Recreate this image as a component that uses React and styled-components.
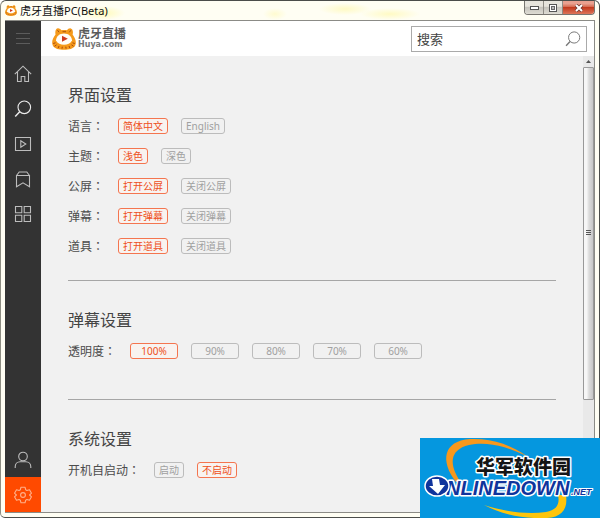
import React, { useState } from "react";
import styled, { createGlobalStyle, css } from "styled-components";

const GlobalStyle = createGlobalStyle`
  *, *::before, *::after { box-sizing: border-box; }
  body {
    margin: 0;
    background: #fff;
    color: #4c4c4c;
    font-family: "Noto Sans", "Noto Sans CJK SC", sans-serif;
  }
  button, input { font: inherit; color: inherit; }
  button { cursor: pointer; }
`;

const Window = styled.div`
  display: flex;
  flex-direction: column;
  height: 100vh;
  min-height: 400px;
  padding: 0 4px 4px;
  border: 1px solid #4b4d4a;
  border-left-color: #8d8d82;
  border-radius: 6px 6px 5px 5px;
  background: #fffef3;
  overflow: hidden;
`;

const TitleBar = styled.header`
  flex: none;
  display: flex;
  align-items: center;
  height: 19px;
  background:
    radial-gradient(ellipse 22px 7px at 98px 12px, #fffbb8, transparent),
    radial-gradient(ellipse 26px 6px at 340px 8px, #fffac4, transparent),
    radial-gradient(ellipse 30px 6px at 385px 13px, #fffac4, transparent),
    radial-gradient(ellipse 12px 6px at 270px 13px, #fffbd0, transparent);
`;

const WindowTitle = styled.h1`
  flex: 1;
  margin: 0 0 0 3px;
  font-size: 11px;
  line-height: 16px;
  font-weight: 400;
  color: #111;
`;

const WindowControls = styled.div`
  display: flex;
  align-self: flex-start;
  height: 14px;
  border: 1px solid #77756f;
  border-top: 0;
  border-radius: 0 0 4px 4px;
  overflow: hidden;
`;

const WindowButton = styled.button`
  display: grid;
  place-items: center;
  width: ${(p) => (p.$close ? 31 : 19)}px;
  padding: 0;
  border: 0;
  border-right: ${(p) => (p.$close ? "0" : "1px solid #8f8c85")};
  background: ${(p) =>
    p.$close
      ? "linear-gradient(#e9a08f 0 20%, #d66a50 45%, #c23a1e 50%, #dd7558)"
      : "linear-gradient(#e6e4dc 0 40%, #c6c4bd 50%, #dedcd3)"};
`;

const Body = styled.div`
  flex: 1;
  display: flex;
  min-height: 0;
  border: 1px solid #8b8b86;
  border-left: 0;
`;

const Sidebar = styled.nav`
  flex: none;
  display: flex;
  flex-direction: column;
  width: 36px;
  background: #333;
`;

const NavButton = styled.button`
  display: grid;
  place-items: center;
  height: 35px;
  padding: 0;
  border: 0;
  background: ${(p) => (p.$active ? "#ff4a00" : "transparent")};
  color: ${(p) => (p.$active ? "#ffb08a" : p.$dim ? "#5c5c5c" : p.$bright ? "#ececec" : "#bdbdbd")};
  ${(p) => p.$last && css`margin-top: auto;`}
`;

const Main = styled.main`
  flex: 1;
  display: flex;
  flex-direction: column;
  min-width: 0;
  background: #f1f1f1;
`;

const TopBar = styled.div`
  flex: none;
  display: flex;
  align-items: center;
  justify-content: space-between;
  height: 35px;
  padding: 0 7px 0 11px;
  background: #fff;
`;

const Brand = styled.a`
  display: flex;
  align-items: center;
  gap: 2px;
  color: #5a5a5a;
  text-decoration: none;
`;

const BrandText = styled.span`
  display: flex;
  flex-direction: column;
`;

const BrandName = styled.strong`
  font-size: 12px;
  line-height: 12px;
  font-weight: 700;
`;

const BrandDomain = styled.span`
  font-family: "DejaVu Sans", sans-serif;
  font-size: 8px;
  line-height: 9px;
  font-weight: 700;
  color: #777;
`;

const SearchBox = styled.form`
  display: flex;
  align-items: center;
  width: 30%;
  min-width: 176px;
  height: 26px;
  padding: 0 5px;
  border: 1px solid #aaa;
  background: #fff;
`;

const SearchInput = styled.input`
  flex: 1;
  min-width: 0;
  padding: 0;
  border: 0;
  outline: 0;
  background: transparent;
  font-size: 13px;
  line-height: 20px;
  &::placeholder { color: #444; opacity: 1; }
`;

const SearchButton = styled.button`
  display: grid;
  place-items: center;
  padding: 0;
  border: 0;
  background: transparent;
  color: #777;
`;

const Viewport = styled.div`
  flex: 1;
  display: flex;
  min-height: 0;
`;

const Settings = styled.div`
  flex: 1;
  min-width: 0;
  padding: 0 27px;
  overflow: hidden;
`;

const Section = styled.section`
  padding: 27px 0 ${(p) => (p.$roomy ? 33 : 19)}px;
  & + & { border-top: 1px solid #a6a6a6; }
`;

const SectionTitle = styled.h2`
  margin: 0 0 4px;
  font-size: 16px;
  line-height: 24px;
  font-weight: 400;
  color: #444;
`;

const Row = styled.div`
  display: flex;
  align-items: center;
  height: 30px;
  gap: 13px;
`;

const RowLabel = styled.span`
  padding-right: 1px;
  font-size: 12px;
  line-height: 20px;
  color: #4c4c4c;
  white-space: nowrap;
`;

const Colon = styled.span`
  font-family: "Noto Sans CJK TC", sans-serif;
`;

const Chip = styled.button`
  min-width: ${(p) => (p.$wide ? 48 : 0)}px;
  height: 16px;
  padding: 0 4px;
  border: 1px solid ${(p) => (p.$on ? "#f4754f" : "#bcbcbc")};
  border-radius: 3px;
  background: ${(p) => (p.$on ? "#f8f3f0" : "transparent")};
  color: ${(p) => (p.$on ? "#ee4f20" : "#a0a0a0")};
  font-size: 10px;
  line-height: 14px;
  white-space: nowrap;
`;

const ScrollTrack = styled.div`
  flex: none;
  display: flex;
  flex-direction: column;
  width: 11px;
  background: #e9e9e9;
`;

const ScrollArrow = styled.button`
  display: grid;
  place-items: center;
  height: 11px;
  padding: 0;
  border: 0;
  background: transparent;
`;

const ScrollThumb = styled.div`
  display: grid;
  place-items: center;
  height: 73%;
  border: 1px solid #999;
  border-radius: 1px;
  background: linear-gradient(90deg, #f6f6f6 0 30%, #dcdcdc 55%, #c6c6c6);
`;

const Watermark = styled.aside`
  position: fixed;
  right: 0;
  bottom: 0;
  width: 180px;
  height: 80px;
  background: #0597df;
  svg { display: block; }
`;

function Icon({ size = 18, children }) {
  return (
    <svg width={size} height={size} viewBox="0 0 18 18" fill="none" stroke="currentColor" strokeWidth="1.1" aria-hidden="true">
      {children}
    </svg>
  );
}

const glyphs = {
  menu: <path d="M2 3.5h14M2 8.5h14M2 13.5h14" />,
  home: <path d="M.8 9.2 9 1.2l8.2 8M3.5 7v9.5h3.7v-5h3.6v5h3.7V7" />,
  search: <><circle cx="10.3" cy="7.3" r="6.3" /><path d="M5.7 11.8 1.2 16.5" strokeWidth="1.5" /></>,
  video: <><path d="M1.5 2.5h15v13h-15z" /><path d="M6.8 5.8v6.4L11.8 9z" /></>,
  bookmark: <><path d="M2.5 5.5h13v11.2L9 12.8l-6.5 3.9z" /><path d="M2.5 5.5 5.2 2h7.6l2.7 3.5" /></>,
  grid: <path d="M1.5 1.5h6.3v6.3H1.5zM10.2 1.5h6.3v6.3h-6.3zM1.5 10.2h6.3v6.3H1.5zM10.2 10.2h6.3v6.3h-6.3z" />,
  user: <><circle cx="9" cy="5.5" r="4.3" /><path d="M1.2 17v-1.2c0-3 2.2-5 5-5h5.6c2.8 0 5 2 5 5V17" /></>,
  gear: (
    <>
      <path d="M7 1.2h4l.7 2.6 1.2.7 2.6-.8 2 3.5L15.6 9l1.900 1.800-2 3.500-2.600-.8-1.200.7-.7 2.600H7l-.7-2.600-1.200-.7-2.600.8-2-3.500L2.400 9 .5 7.200l2-3.500 2.600.8 1.200-.7z" strokeLinejoin="round" />
      <circle cx="9" cy="9" r="2.4" />
    </>
  ),
};

function TigerLogo({ width, height }) {
  return (
    <svg width={width} height={height} viewBox="0 0 24 22" aria-hidden="true">
      <path d="M3.500 6.500C2.800 3 4 .4 6 .3c1.600 0 2.700 1 3.500 2 1.800-.5 3.800-.5 5.500 0 .9-1.300 2.200-2.200 3.700-1.900 2.100.5 2.700 3.200 1.900 6.100 2.600 3.300 4.200 7.800 2.600 11-1.700 3.300-6.200 4.300-11.200 4.300S2.500 20.800.8 17.500c-1.600-3.200 0-7.700 2.700-11z" fill="#f59a1b" />
      <path d="M5.500 2.200 7 4.200M18.800 2.300l-1.500 2M10.500 3.700h3.500" stroke="#a8520f" strokeWidth="1" />
      <path d="M4 12.500c.2-4.200 3.500-7 8-7s7.800 2.800 8 7c-1.600 3-4.500 4.200-8 4.200s-6.400-1.200-8-4.200z" fill="#fffdf8" />
      <path d="M10 7.800v6l5.800-3z" fill="#cf3a20" />
      <path d="M1.200 15.500l2.300-.7M2.500 18.300l2-1.500M22.800 15.500l-2.300-.7M21.500 18.300l-2-1.500M7 18l-.8 2M10.300 18.700l-.3 2M13.800 18.700l.3 2M17 18l.8 2" stroke="#a8490d" strokeWidth="1" />
    </svg>
  );
}

const navItems = [
  { id: "menu", label: "菜单", dim: true },
  { id: "home", label: "首页" },
  { id: "search", label: "搜索", bright: true },
  { id: "video", label: "直播" },
  { id: "bookmark", label: "收藏" },
  { id: "grid", label: "分类" },
  { id: "user", label: "用户", last: true },
  { id: "gear", label: "设置", active: true },
];

const sections = [
  {
    title: "界面设置",
    rows: [
      { label: "语言", options: ["简体中文", "English"], initial: 0 },
      { label: "主题", options: ["浅色", "深色"], initial: 0 },
      { label: "公屏", options: ["打开公屏", "关闭公屏"], initial: 0 },
      { label: "弹幕", options: ["打开弹幕", "关闭弹幕"], initial: 0 },
      { label: "道具", options: ["打开道具", "关闭道具"], initial: 0 },
    ],
  },
  {
    title: "弹幕设置",
    roomy: true,
    rows: [{ label: "透明度", options: ["100%", "90%", "80%", "70%", "60%"], initial: 0, wide: true }],
  },
  {
    title: "系统设置",
    rows: [{ label: "开机自启动", options: ["启动", "不启动"], initial: 1 }],
  },
];

function OptionRow({ label, options, initial, wide }) {
  const [selected, setSelected] = useState(initial);
  return (
    <Row role="group" aria-label={label}>
      <RowLabel>{label}<Colon>：</Colon></RowLabel>
      {options.map((option, i) => (
        <Chip key={option} type="button" $wide={wide} $on={i === selected} aria-pressed={i === selected} onClick={() => setSelected(i)}>
          {option}
        </Chip>
      ))}
    </Row>
  );
}

function SiteMark() {
  return (
    <Watermark>
      <svg width="180" height="80" viewBox="0 0 180 80" role="img" aria-label="华军软件园 ONLINEDOWN.NET">
        <path d="M36 44C20 23 23 3 50 1c22-1 42 6 58 18C88 8 66 3 49 7 28 12 30 28 40 43z" fill="#f7981d" />
        <path d="M64 67c19 10 41 14 63 13 15-1 21-9 19-23h-8c2 9-1 15-12 17-20 3-43-1-62-7z" fill="#fdc50c" />
        <g stroke="#fff" strokeLinejoin="round" paintOrder="stroke">
          <text x="56" y="36" fontFamily="'Noto Sans CJK SC', sans-serif" fontSize="19" fontWeight="900" fill="#151515" strokeWidth="3">华军软件园</text>
          <text x="26" y="57" fontFamily="'Liberation Sans', sans-serif" fontSize="20" fontWeight="700" fontStyle="italic" fill="#10349c" strokeWidth="3">NLINEDOWN</text>
          <text x="151" y="57" fontFamily="'Liberation Sans', sans-serif" fontSize="9" fontWeight="700" fontStyle="italic" fill="#10349c" strokeWidth="2">.NET</text>
        </g>
        <ellipse cx="17" cy="48" rx="12" ry="10" fill="#10349c" stroke="#fff" strokeWidth="1.5" />
        <path d="M12 41h7l1 6h5l-7 9-9-8h4z" fill="#fff" />
      </svg>
    </Watermark>
  );
}

export default function App() {
  return (
    <>
      <GlobalStyle />
      <Window>
        <TitleBar>
          <TigerLogo width={12} height={11} />
          <WindowTitle>虎牙直播PC(Beta)</WindowTitle>
          <WindowControls>
            <WindowButton type="button" aria-label="最小化">
              <svg width="9" height="4"><rect x=".5" y=".5" width="8" height="3" fill="#fff" stroke="#555" /></svg>
            </WindowButton>
            <WindowButton type="button" aria-label="最大化">
              <svg width="8" height="8"><rect x=".5" y=".5" width="7" height="7" fill="#fff" stroke="#555" /><rect x="2.5" y="2.5" width="3" height="3" fill="#bbb" stroke="#666" /></svg>
            </WindowButton>
            <WindowButton type="button" $close aria-label="关闭">
              <svg width="10" height="8" viewBox="0 0 10 8"><path d="m2 1 6 6M8 1 2 7" stroke="#6b3a35" strokeWidth="3.5" /><path d="m2 1 6 6M8 1 2 7" stroke="#fff" strokeWidth="2" /></svg>
            </WindowButton>
          </WindowControls>
        </TitleBar>
        <Body>
          <Sidebar>
            {navItems.map((n) => (
              <NavButton key={n.id} type="button" aria-label={n.label} $dim={n.dim} $bright={n.bright} $last={n.last} $active={n.active}>
                <Icon>{glyphs[n.id]}</Icon>
              </NavButton>
            ))}
          </Sidebar>
          <Main>
            <TopBar>
              <Brand href="#home">
                <TigerLogo width={24} height={22} />
                <BrandText>
                  <BrandName>虎牙直播</BrandName>
                  <BrandDomain>Huya.com</BrandDomain>
                </BrandText>
              </Brand>
              <SearchBox role="search" onSubmit={(e) => e.preventDefault()}>
                <SearchInput type="text" placeholder="搜索" aria-label="搜索" />
                <SearchButton type="submit" aria-label="搜索"><Icon size={16}>{glyphs.search}</Icon></SearchButton>
              </SearchBox>
            </TopBar>
            <Viewport>
              <Settings>
                {sections.map((s) => (
                  <Section key={s.title} $roomy={s.roomy}>
                    <SectionTitle>{s.title}</SectionTitle>
                    {s.rows.map((r) => <OptionRow key={r.label} {...r} />)}
                  </Section>
                ))}
              </Settings>
              <ScrollTrack>
                <ScrollArrow type="button" aria-label="向上滚动">
                  <svg width="5" height="3"><path d="M0 3 2.5 0 5 3z" fill="#555" /></svg>
                </ScrollArrow>
                <ScrollThumb>
                  <svg width="5" height="6" stroke="#555"><path d="M0 .5h5M0 2.5h5M0 4.5h5" /></svg>
                </ScrollThumb>
              </ScrollTrack>
            </Viewport>
          </Main>
        </Body>
      </Window>
      <SiteMark />
    </>
  );
}
